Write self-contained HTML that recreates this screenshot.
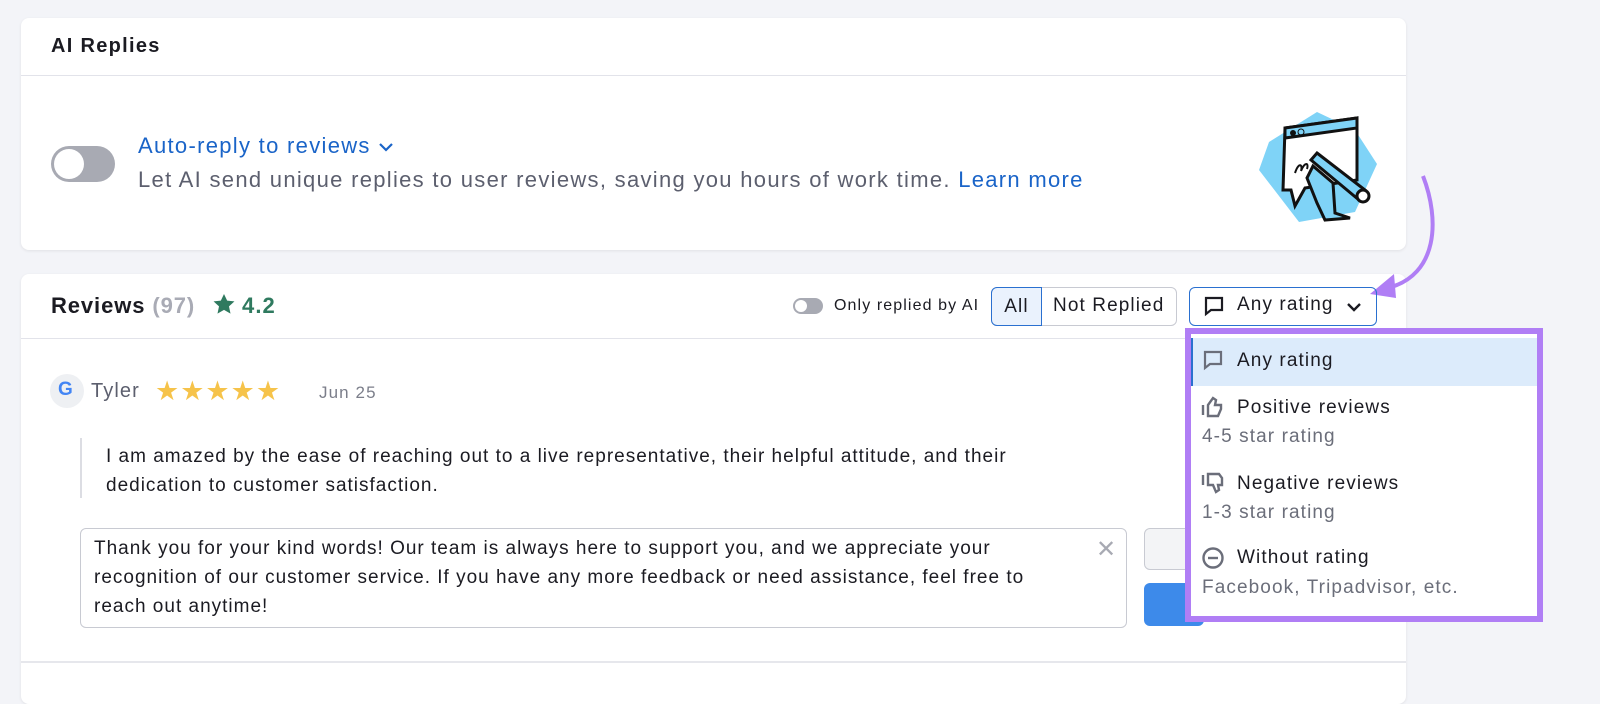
<!DOCTYPE html>
<html><head><meta charset="utf-8"><style>
*{box-sizing:border-box;margin:0;padding:0}
body{width:1600px;height:692px;background:#f3f4f8;font-family:"Liberation Sans",sans-serif;position:relative;overflow:hidden;color:#1b1b22;letter-spacing:1.1px}
.a{position:absolute;white-space:nowrap}
.card{position:absolute;background:#fff;border-radius:8px;box-shadow:0 1px 3px rgba(0,0,0,.08)}
</style></head><body>
<div class="card" style="left:21px;top:18px;width:1385px;height:232px"></div>
<div class="a" style="left:21px;top:75px;width:1385px;height:1px;background:#e2e3ea"></div>
<div class="a" style="left:51px;top:35px;font-size:20px;font-weight:bold;letter-spacing:1.3px">AI Replies</div>
<div class="a" style="left:51px;top:146px;width:64px;height:36px;border-radius:18px;background:#a8aab3"></div>
<div class="a" style="left:54px;top:149px;width:30px;height:30px;border-radius:50%;background:#fff"></div>
<div class="a" style="left:138px;top:133px;font-size:22px;color:#1a64c8;letter-spacing:1.3px">Auto-reply to reviews <svg width="16" height="12" viewBox="0 0 16 12" style="vertical-align:middle"><path d="M2 3l6 6 6-6" stroke="#1a64c8" stroke-width="2.2" fill="none"/></svg></div>
<div class="a" style="left:138px;top:167px;font-size:22px;color:#5c5f6e;letter-spacing:1.3px">Let AI send unique replies to user reviews, saving you hours of work time. <span style="color:#1a64c8">Learn more</span></div>
<svg class="a" style="left:1255px;top:108px" width="125" height="115" viewBox="0 0 125 115">
<polygon points="62,4 100,22 122,56 100,104 44,114 4,62 14,34" fill="#7fd3f7"/>
<path d="M30,20 L102,10 L102,72 L50,80 L40,98 L36,82 L28,82 Z" fill="#fff" stroke="#111" stroke-width="3"/>
<path d="M30,20 L102,10 L102,20 L30,30Z" fill="#7fd3f7" stroke="#111" stroke-width="3"/>
<circle cx="38" cy="25" r="3" fill="#111"/><circle cx="46" cy="24" r="3" fill="none" stroke="#111"/>
<path d="M40,65 c4,-12 8,-8 6,-2 c4,-10 8,-8 6,-2" stroke="#111" stroke-width="2" fill="none"/>
<path d="M62,45 L110,82 L104,92 L56,52 Z" fill="#7fd3f7" stroke="#111" stroke-width="3"/>
<circle cx="108" cy="88" r="6" fill="#fff" stroke="#111" stroke-width="3"/>
<path d="M58,58 L78,75 L80,105 L95,110 L70,112 L62,95 L52,70 Z" fill="#7fd3f7" stroke="#111" stroke-width="3"/>
</svg>

<div class="card" style="left:21px;top:274px;width:1385px;height:430px"></div>
<svg class="a" style="left:1360px;top:170px" width="80" height="130" viewBox="0 0 80 130">
<path d="M63,6 C80,50 78,105 28,118" stroke="#b07ef5" stroke-width="4" fill="none"/>
<path d="M10,124 L34,104 L36,128 Z" fill="#b07ef5"/>
</svg>
<div class="a" style="left:21px;top:338px;width:1385px;height:1px;background:#e2e3ea"></div>
<div class="a" style="left:21px;top:661px;width:1385px;height:2px;background:#e6e7ec"></div>
<div class="a" style="left:51px;top:293px;font-size:22px;font-weight:bold;letter-spacing:0.9px">Reviews <span style="color:#a9abb5">(97)</span></div>
<svg class="a" style="left:212px;top:293px" width="24" height="23" viewBox="0 0 24 24"><path d="M12 1l3.3 7 7.6.8-5.7 5.1 1.6 7.6L12 17.6l-6.8 3.9 1.6-7.6L1.1 8.8l7.6-.8z" fill="#2f7a5f"/></svg>
<div class="a" style="left:242px;top:293px;font-size:22px;font-weight:bold;color:#2f7a5f">4.2</div>
<div class="a" style="left:793px;top:298px;width:30px;height:16px;border-radius:8px;background:#a8aab3"></div>
<div class="a" style="left:795px;top:300px;width:12px;height:12px;border-radius:50%;background:#fff"></div>
<div class="a" style="left:834px;top:297px;font-size:16px">Only replied by AI</div>
<div class="a" style="left:991px;top:287px;width:186px;height:39px;border:1px solid #c8cad2;border-radius:6px"></div>
<div class="a" style="left:991px;top:287px;width:51px;height:39px;border:1px solid #2a70d0;border-radius:6px 0 0 6px;background:#eaf2fd;font-size:19px;text-align:center;line-height:37px">All</div>
<div class="a" style="left:1053px;top:295px;font-size:19px">Not Replied</div>
<div class="a" style="left:1189px;top:287px;width:188px;height:39px;border:1.5px solid #2a70d0;border-radius:6px"></div>
<svg class="a" style="left:1203px;top:295px" width="22" height="22" viewBox="0 0 22 22"><path d="M3 3h16v12H8l-5 4z" fill="none" stroke="#1b1b22" stroke-width="2.2"/></svg>
<div class="a" style="left:1237px;top:294px;font-size:19px">Any rating</div>
<svg class="a" style="left:1346px;top:301px" width="16" height="12" viewBox="0 0 16 12"><path d="M2 3l6 6 6-6" stroke="#1b1b22" stroke-width="2.4" fill="none"/></svg>

<div class="a" style="left:50px;top:374px;width:34px;height:34px;border-radius:50%;background:#eef0f3"></div>
<div class="a" style="left:58px;top:379px;font-size:19px;font-weight:bold;color:#4285f4">G</div>
<div class="a" style="left:91px;top:380px;font-size:20px;color:#5c5f6e">Tyler</div>
<div class="a" style="left:155px;top:376px;font-size:27px;color:#f6c34a;letter-spacing:1px">★★★★★</div>
<div class="a" style="left:319px;top:383px;font-size:17px;color:#7b7e8a">Jun 25</div>
<div class="a" style="left:80px;top:438px;width:2px;height:60px;background:#dcdde3"></div>
<div class="a" style="left:106px;top:442px;font-size:19px;line-height:29px;letter-spacing:1px">I am amazed by the ease of reaching out to a live representative, their helpful attitude, and their<br>dedication to customer satisfaction.</div>
<div class="a" style="left:80px;top:528px;width:1047px;height:100px;border:1px solid #c8cad2;border-radius:6px"></div>
<div class="a" style="left:94px;top:534px;font-size:19px;line-height:29px;letter-spacing:1px">Thank you for your kind words! Our team is always here to support you, and we appreciate your<br>recognition of our customer service. If you have any more feedback or need assistance, feel free to<br>reach out anytime!</div>
<div class="a" style="left:1096px;top:535px;font-size:24px;color:#a8aab3">✕</div>
<div class="a" style="left:1144px;top:528px;width:60px;height:42px;border:1px solid #c8cad2;border-radius:6px;background:#f3f4f6"></div>
<div class="a" style="left:1144px;top:583px;width:60px;height:43px;border-radius:6px;background:#3d8aea"></div>

<div class="a" style="left:1185px;top:328px;width:358px;height:294px;border:6px solid #b07ef5;background:#fff"></div>
<div class="a" style="left:1191px;top:338px;width:346px;height:48px;background:#dcebfb;border-left:2px solid #2a70d0"></div>
<svg class="a" style="left:1202px;top:349px" width="22" height="22" viewBox="0 0 22 22"><path d="M3 3h16v12H8l-5 4z" fill="none" stroke="#6b6e7a" stroke-width="2.2"/></svg>
<div class="a" style="left:1237px;top:350px;font-size:19px">Any rating</div>
<svg class="a" style="left:1201px;top:396px" width="24" height="22" viewBox="0 0 24 22"><path d="M2 9v10M7 9v11h10l3-7V9h-6l1-5-3-2z" fill="none" stroke="#6b6e7a" stroke-width="2.4"/></svg>
<div class="a" style="left:1237px;top:397px;font-size:19px">Positive reviews</div>
<div class="a" style="left:1202px;top:426px;font-size:19px;color:#6b6e7a">4-5 star rating</div>
<svg class="a" style="left:1201px;top:472px" width="24" height="22" viewBox="0 0 24 22"><path d="M2 3v10M7 2v11h5l3 7 3-2-1-5h4V6l-3-4z" fill="none" stroke="#6b6e7a" stroke-width="2.4"/></svg>
<div class="a" style="left:1237px;top:473px;font-size:19px">Negative reviews</div>
<div class="a" style="left:1202px;top:502px;font-size:19px;color:#6b6e7a">1-3 star rating</div>
<svg class="a" style="left:1201px;top:546px" width="24" height="24" viewBox="0 0 24 24"><circle cx="12" cy="12" r="9.5" fill="none" stroke="#6b6e7a" stroke-width="2.4"/><path d="M7 12h10" stroke="#6b6e7a" stroke-width="2.4"/></svg>
<div class="a" style="left:1237px;top:547px;font-size:19px">Without rating</div>
<div class="a" style="left:1202px;top:577px;font-size:19px;color:#6b6e7a">Facebook, Tripadvisor, etc.</div>
</body></html>
